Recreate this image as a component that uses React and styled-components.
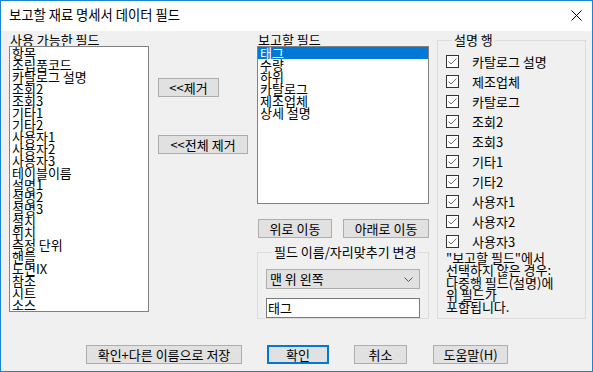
import React from 'react';
import styled, { createGlobalStyle } from 'styled-components';

const GlobalStyle = createGlobalStyle`
  html, body {
    margin: 0;
    padding: 0;
    background: #ffffff;
  }
  * {
    box-sizing: border-box;
  }
`;

const Window = styled.div`
  width: 593px;
  height: 372px;
  border: 1px solid #1883d7;
  background: #f0f0f0;
  font-family: "Noto Sans CJK KR", "Noto Sans", sans-serif;
  font-size: 13px;
  color: #000;
  display: flex;
  flex-direction: column;
  overflow: hidden;
`;

const TitleBar = styled.div`
  height: 30px;
  background: #fff;
  display: flex;
  align-items: center;
  justify-content: space-between;
  padding: 0 10px 0 8px;
  flex-shrink: 0;
`;

const Title = styled.span`
  font-size: 13.3px;
  line-height: 14px;
  margin-top: -2px;
`;

const CloseButton = styled.span`
  display: flex;
  align-items: center;
  margin-top: -1px;
`;

const Body = styled.div`
  flex: 1;
  padding: 2px 0 0 8px;
  display: flex;
  flex-direction: column;
`;

const MainRow = styled.div`
  display: flex;
  align-items: flex-start;
`;

const Column = styled.div`
  width: ${(p) => p.$width}px;
  margin-left: ${(p) => p.$offset || 0}px;
  display: flex;
  flex-direction: column;
  align-items: flex-start;
`;

const Label = styled.div`
  height: 13px;
  line-height: 13px;
  padding-left: 1px;
  white-space: nowrap;
`;

const ListBox = styled.div`
  width: 100%;
  height: ${(p) => p.$height}px;
  background: #fff;
  border: 1px solid #828282;
  overflow: hidden;
`;

const ListItem = styled.div`
  height: 12px;
  line-height: 12px;
  padding-left: 2px;
  white-space: nowrap;
  background: ${(p) => (p.$selected ? '#0078d7' : 'transparent')};
  color: ${(p) => (p.$selected ? '#fff' : '#000')};
`;

const Button = styled.button`
  width: ${(p) => p.$width}px;
  height: 19px;
  margin-top: ${(p) => p.$top || 0}px;
  padding: 0;
  background: #e1e1e1;
  border: ${(p) => (p.$default ? '2px solid #0078d7' : '1px solid #adadad')};
  font-family: inherit;
  font-size: 13px;
  line-height: 16px;
  color: #000;
  white-space: nowrap;
`;

const ButtonPair = styled.div`
  display: flex;
  justify-content: space-between;
  width: 100%;
  margin-top: 15px;
  padding-left: 1px;
`;

const Group = styled.fieldset`
  margin: ${(p) => p.$top || 0}px 0 0 0;
  padding: ${(p) => p.$padding};
  width: ${(p) => p.$width}px;
  height: ${(p) => p.$height}px;
  border: 1px solid #dcdcdc;
  min-width: 0;
  display: flex;
  flex-direction: column;
`;

const Legend = styled.legend`
  padding: 0 2px;
  margin-left: 6px;
  line-height: 14px;
  height: 14px;
  white-space: nowrap;
`;

const Combo = styled.div`
  height: 20px;
  background: #e1e1e1;
  border: 1px solid #adadad;
  display: flex;
  align-items: center;
  justify-content: space-between;
  padding: 0 6px 0 3px;
  line-height: 16px;
`;

const TextBox = styled.div`
  height: 20px;
  margin-top: 9px;
  background: #fff;
  border: 1px solid #7a7a7a;
  line-height: 17px;
  padding-left: 1px;
`;

const CheckRow = styled.div`
  height: 20px;
  display: flex;
  align-items: center;
  gap: 13px;
`;

const Note = styled.div`
  margin-top: 1px;
  line-height: 12.25px;
  white-space: nowrap;
`;

const BottomRow = styled.div`
  display: flex;
  gap: 25px;
  margin: 26px 0 0 77px;
`;

const availableFields = [
  '항목', '조립품코드', '카탈로그 설명', '조회2', '조회3', '기타1', '기타2',
  '사용자1', '사용자2', '사용자3', '테이블이름', '설명1', '설명2', '설명3',
  '설치', '위치', '측정 단위', '핸들', '도면IX', '참조', '시트', '소스',
];

const reportFields = ['태그', '수량', '하위', '카탈로그', '제조업체', '상세 설명'];

const descriptionRows = [
  '카탈로그 설명', '제조업체', '카탈로그', '조회2', '조회3',
  '기타1', '기타2', '사용자1', '사용자2', '사용자3',
];

function CheckBox() {
  return (
    <svg width="13" height="13" viewBox="0 0 13 13">
      <rect x="0.5" y="0.5" width="12" height="12" fill="#fff" stroke="#333" />
      <path d="M2.5 6.5 L5 9 L10.5 3.5" fill="none" stroke="#707070" strokeWidth="1" />
    </svg>
  );
}

export default function App() {
  return (
    <>
      <GlobalStyle />
      <Window>
        <TitleBar>
          <Title>보고할 재료 명세서 데이터 필드</Title>
          <CloseButton>
            <svg width="11" height="11" viewBox="0 0 11 11">
              <path d="M0.5 0.5 L10.5 10.5 M10.5 0.5 L0.5 10.5" stroke="#000" strokeWidth="1" />
            </svg>
          </CloseButton>
        </TitleBar>
        <Body>
          <MainRow>
            <Column $width={140}>
              <Label>사용 가능한 필드</Label>
              <ListBox $height={266}>
                {availableFields.map((f) => (
                  <ListItem key={f}>{f}</ListItem>
                ))}
              </ListBox>
            </Column>

            <Column $width={91} $offset={9}>
              <Button $width={61} $top={45}>&lt;&lt;제거</Button>
              <Button $width={90} $top={38}>&lt;&lt;전체 제거</Button>
            </Column>

            <Column $width={172} $offset={8}>
              <Label>보고할 필드</Label>
              <ListBox $height={158}>
                {reportFields.map((f, i) => (
                  <ListItem key={f} $selected={i === 0}>{f}</ListItem>
                ))}
              </ListBox>
              <ButtonPair>
                <Button $width={74}>위로 이동</Button>
                <Button $width={86}>아래로 이동</Button>
              </ButtonPair>
              <Group $top={7} $width={172} $height={74} $padding="10px 8px 0 8px">
                <Legend>필드 이름/자리맞추기 변경</Legend>
                <Combo>
                  <span>맨 위 왼쪽</span>
                  <svg width="9" height="5" viewBox="0 0 9 5">
                    <path d="M0.5 0.5 L4.5 4.5 L8.5 0.5" fill="none" stroke="#555" strokeWidth="1" />
                  </svg>
                </Combo>
                <TextBox>태그</TextBox>
              </Group>
            </Column>

            <Column $width={149} $offset={8}>
              <Group $width={149} $height={286} $padding="4px 8px 0 8px">
                <Legend>설명 행</Legend>
                {descriptionRows.map((r) => (
                  <CheckRow key={r}>
                    <CheckBox />
                    <span>{r}</span>
                  </CheckRow>
                ))}
                <Note>
                  "보고할 필드"에서<br />
                  선택하지 않은 경우:<br />
                  다중행 필드(설명)에<br />
                  위 필드가<br />
                  포함됩니다.
                </Note>
              </Group>
            </Column>
          </MainRow>

          <BottomRow>
            <Button $width={156}>확인+다른 이름으로 저장</Button>
            <Button $width={62} $default>확인</Button>
            <Button $width={53}>취소</Button>
            <Button $width={75} style={{ marginLeft: 1 }}>도움말(H)</Button>
          </BottomRow>
        </Body>
      </Window>
    </>
  );
}
